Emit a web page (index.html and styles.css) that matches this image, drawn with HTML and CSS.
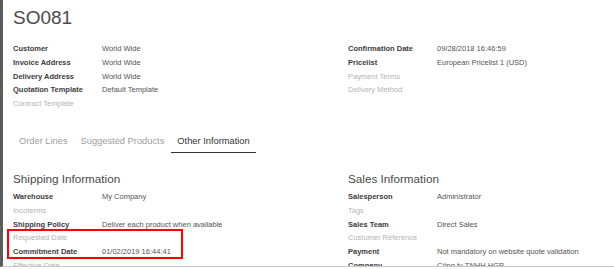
FILE: index.html
```html
<!DOCTYPE html>
<html lang="en">
<head>
    <meta charset="UTF-8">
    <meta name="viewport" content="width=device-width, initial-scale=1.0">
    <title>SO081</title>
    <link rel="stylesheet" href="styles.css">
</head>
<body>
    <div class="sheet">
        <h1 class="title">SO081</h1>

        <div class="groups">
            <div class="group">
                <div class="field"><span class="label">Customer</span><span class="value">World Wide</span></div>
                <div class="field"><span class="label">Invoice Address</span><span class="value">World Wide</span></div>
                <div class="field"><span class="label">Delivery Address</span><span class="value">World Wide</span></div>
                <div class="field"><span class="label">Quotation Template</span><span class="value">Default Template</span></div>
                <div class="field"><span class="label muted">Contract Template</span></div>
            </div>
            <div class="group">
                <div class="field"><span class="label">Confirmation Date</span><span class="value">09/28/2018 16:46:59</span></div>
                <div class="field"><span class="label">Pricelist</span><span class="value">European Pricelist 1 (USD)</span></div>
                <div class="field"><span class="label muted">Payment Terms</span></div>
                <div class="field"><span class="label muted">Delivery Method</span></div>
            </div>
        </div>

        <div class="tabs">
            <span class="tab">Order Lines</span>
            <span class="tab">Suggested Products</span>
            <span class="tab active">Other Information</span>
        </div>

        <div class="groups">
            <div class="group">
                <h2 class="group-title">Shipping Information</h2>
                <div class="field"><span class="label">Warehouse</span><span class="value">My Company</span></div>
                <div class="field"><span class="label muted">Incoterms</span></div>
                <div class="field"><span class="label">Shipping Policy</span><span class="value">Deliver each product when available</span></div>
                <div class="highlight">
                    <div class="field"><span class="label muted">Requested Date</span></div>
                    <div class="field"><span class="label">Commitment Date</span><span class="value">01/02/2019 16:44:41</span></div>
                </div>
                <div class="field"><span class="label muted">Effective Date</span></div>
            </div>
            <div class="group">
                <h2 class="group-title">Sales Information</h2>
                <div class="field"><span class="label">Salesperson</span><span class="value">Administrator</span></div>
                <div class="field"><span class="label muted">Tags</span></div>
                <div class="field"><span class="label">Sales Team</span><span class="value">Direct Sales</span></div>
                <div class="field"><span class="label muted">Customer Reference</span></div>
                <div class="field"><span class="label">Payment</span><span class="value">Not mandatory on website quote validation</span></div>
                <div class="field"><span class="label">Company</span><span class="value">Công ty TNHH HGP</span></div>
            </div>
        </div>
    </div>
</body>
</html>
```

FILE: styles.css
```css
body {
    margin: 0;
    background: #fff;
    font-family: "Liberation Sans", Arial, sans-serif;
    color: #4c4c4c;
}
.sheet {
    height: 267px;
    overflow: hidden;
    border-left: 3px solid #5c5c5c;
    border-bottom: 1px solid #c8c8c8;
    padding: 7.5px 0 0 10px;
    box-sizing: border-box;
}
.title {
    margin: 0;
    font-size: 19px;
    line-height: 19px;
    font-weight: normal;
    color: #4a4a4a;
}
.groups {
    display: grid;
    grid-template-columns: 335px 1fr;
    margin-top: 15.5px;
}
.field {
    display: flex;
    height: 13.8px;
    line-height: 13.8px;
    font-size: 7.5px;
    white-space: nowrap;
}
.label {
    width: 89px;
    font-weight: bold;
    color: #3c3c3c;
}
.label.muted {
    font-weight: normal;
    color: #b4b4b4;
}
.value {
    color: #555;
}
.tabs {
    display: flex;
    margin-top: 24px;
    font-size: 9.3px;
    line-height: 12px;
}
.tab {
    padding: 0 6px 5px;
    margin-right: 1px;
    color: #a0a0a0;
    border-bottom: 1px solid transparent;
}
.tab.active {
    color: #333;
    border-bottom: 1.5px solid #333;
}
.groups + .tabs + .groups {
    margin-top: 19px;
}
.group-title {
    margin: 0 0 4px;
    font-size: 11.7px;
    line-height: 14px;
    font-weight: normal;
    color: #4a4a4a;
}
.highlight {
    position: relative;
}
.highlight::after {
    content: "";
    position: absolute;
    left: -6px;
    top: -2px;
    bottom: 0;
    width: 176px;
    border: 2px solid #f00;
    box-sizing: border-box;
}
```
